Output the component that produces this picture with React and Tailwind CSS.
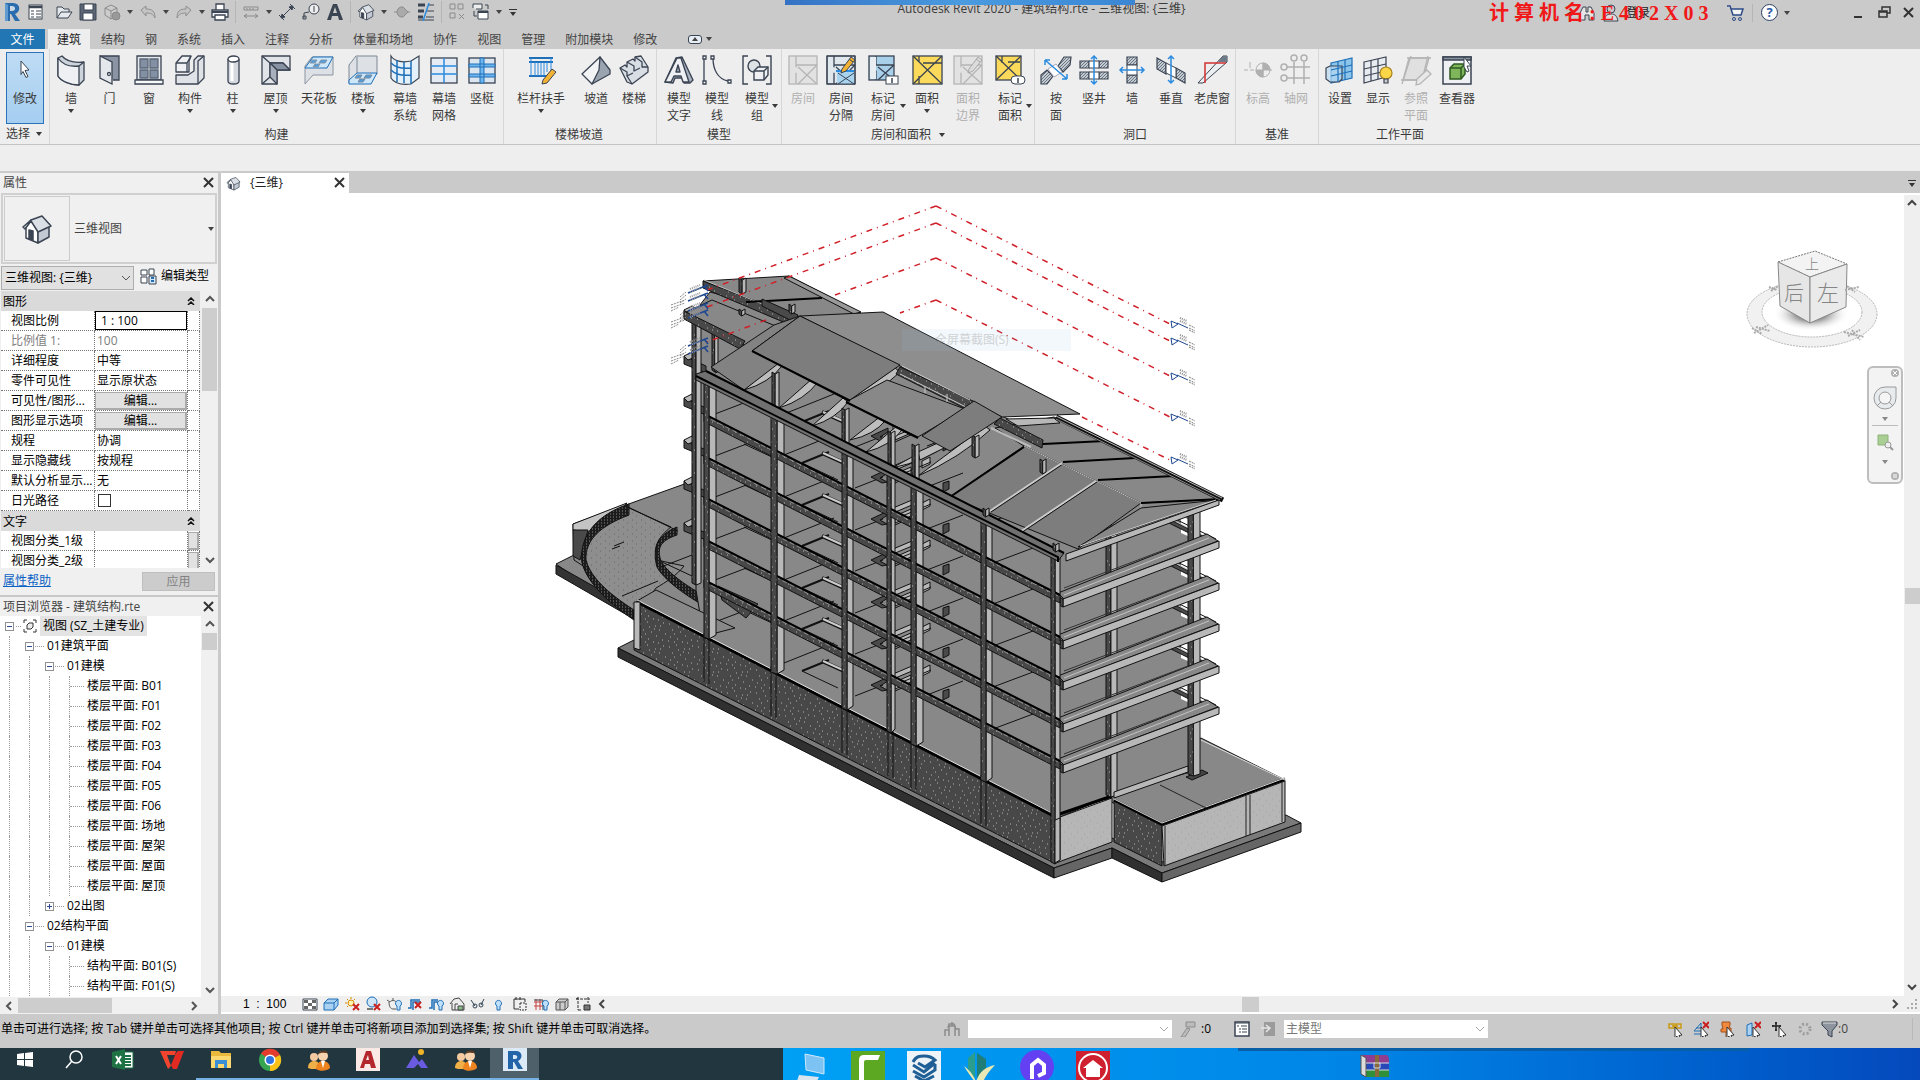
import React from "react";

const INK = "#3b4453";
const BLUE = "#1e6fb8";

// ---------- small helpers ----------
function Svg({ s = 16, children, className = "" }) {
  return (
    <svg width={s} height={s} viewBox={`0 0 ${s} ${s}`} fill="none" className={`shrink-0 ${className}`}>
      {children}
    </svg>
  );
}

const Down = ({ className = "" }) => (
  <svg width="6" height="4" viewBox="0 0 6 4" className={`shrink-0 ${className}`}>
    <path d="M0 0h6L3 4z" fill="currentColor" />
  </svg>
);

const chevrons = {
  up: "M2 7l4-4 4 4",
  down: "M2 4l4 4 4-4",
  left: "M8 2L4 6l4 4",
  right: "M4 2l4 4-4 4",
};
const Chevron = ({ dir, className = "" }) => (
  <svg width="12" height="12" viewBox="0 0 12 12" fill="none" className={`shrink-0 ${className}`}>
    <path d={chevrons[dir]} stroke="currentColor" strokeWidth="2" />
  </svg>
);

const Close = () => (
  <svg width="12" height="12" viewBox="0 0 12 12" fill="none">
    <path d="M1 1l9 9M10 1l-9 9" stroke="#333" strokeWidth="2" />
  </svg>
);

const House = ({ s = 16 }) => (
  <svg width={s} height={s} viewBox="0 0 32 32" fill="none" stroke={INK} strokeWidth="1.500" strokeLinejoin="round">
    <path d="M5 14l5-7 7 9v14L5 25z" fill="#fff" />
    <path d="M17 16l11-5v13l-11 6z" fill="#c3cad3" />
    <path d="M2 14l8-7 11-4 9 10-13 6-7-11-6 8z" fill="#dbe0e6" />
    <path d="M8 26v-9l4 1v9z" fill={INK} />
  </svg>
);

const Room = ({ fill, ink = INK, box = [4, 2, 25, 28] }) => {
  const [x, y, w, h] = box;
  return (
    <g stroke={ink} strokeWidth="1.3">
      <rect x={x} y={y} width={w} height={h} fill={fill} />
      <path d={`M${x + 7} ${y}v${h * 0.4}M${x + 7} ${y + h * 0.6}v${h * 0.4}M${x + 7} ${y + 9}h${w - 7}M${x + 9} ${y + 11}L${x + w} ${y + h}M${x + w} ${y + 9}L${x + 9} ${y + h}`} />
    </g>
  );
};

const Pencil = ({ color = "#f2b233", ink = INK }) => (
  <g stroke={ink}>
    <path d="M17 15l9-12 4 3-9 11-5 2z" fill={color} />
    <path d="M24 5l4 3" />
  </g>
);

const Hatch = ({ d }) => <path d={d} fill="url(#hatch)" stroke={INK} strokeWidth="1.2" />;
const ARROW = "#2a8be0";

const bigIcons = {
  cursor: <path d="M12 7l8 9-4 .5 3 6-2 1-3-6-2 3z" fill="#fff" stroke={INK} />,
  wall: (
    <g stroke={INK} strokeWidth="1.3" strokeLinejoin="round">
      <path d="M3 4l4-2c4 5 12 7 22 6v18l-5 5C15 31 6 27 3 22z" fill="#cdd3da" />
      <path d="M3 4c4 6 12 9 21 8v19C15 31 6 27 3 22z" fill="#eef0f3" />
      <path d="M24 12l5-4" />
    </g>
  ),
  door: (
    <g stroke={INK} strokeWidth="1.3">
      <path d="M6 2h19v24h-6" fill="#8a94a3" />
      <path d="M6 2l12 6v22L6 24z" fill="#e4e8ec" />
      <circle cx="15" cy="20" r="1.5" fill="#fff" />
    </g>
  ),
  window: (
    <g stroke={INK} strokeWidth="1.3">
      <path d="M4 2h24v24H4z" fill="#e4e8ec" />
      <path d="M7 5h8v9H7zM17 5h8v9h-8zM7 16h8v8H7zM17 16h8v8h-8z" fill="#8390a3" stroke="#5b6778" />
      <path d="M2 26h28v4H2z" fill="#f6f8fa" />
    </g>
  ),
  component: (
    <g stroke={INK} strokeWidth="1.3" strokeLinejoin="round">
      <path d="M2 9l6-7h9l-2 5v11H2z" fill="#eef0f3" />
      <path d="M20 6l4-4h6v22l-6 6H2v-9h12l6-4z" fill="#dfe3e8" />
      <path d="M2 9h11l4-7M13 9v9M24 30V7l6-5" />
    </g>
  ),
  column: (
    <g stroke={INK} strokeWidth="1.3">
      <path d="M11 5v22c0 4 11 4 11 0V5" fill="#d5dae0" />
      <ellipse cx="16.500" cy="5" rx="5.500" ry="3" fill="#fff" />
      <path d="M15 9v18" stroke="#fff" strokeWidth="3" />
    </g>
  ),
  roof: (
    <g stroke={INK} strokeWidth="1.3" strokeLinejoin="round">
      <path d="M2 2h28v14H17v14H2z" fill="#e0e4e9" />
      <path d="M2 2l8 7h13l7 7M10 9v14l-8 7" />
      <path d="M10 9h13l7 7H17z" fill="#8793a3" />
      <path d="M10 9v14l7 7V16z" fill="#a7b0bc" />
    </g>
  ),
  ceiling: (
    <g stroke="#8a94a0">
      <path d="M2 12l7-9h21v18H10l-8 9z" fill="#dde1e5" />
      <path d="M2 14l8-11h20l-6 11z" fill="#cfe7fb" stroke={BLUE} />
      <path d="M9 6h5l-2 3H7zM18 6h6l-2 3h-6zM12 10h5l-2 3h-5z" fill="#4c9fe3" />
    </g>
  ),
  floor: (
    <g stroke="#7c8794">
      <path d="M2 11l7-9h21v18H10L2 29z" fill="#dde1e5" />
      <path d="M10 3v17" />
      <path d="M2 26l8-7h20l-6 11H2z" fill="#cfe7fb" stroke={BLUE} />
      <path d="M10 21h5l-2 3H8zM19 21h6l-2 3h-6zM13 25h5l-2 3h-5z" fill="#4c9fe3" />
    </g>
  ),
  curtain: (
    <g stroke={INK} strokeWidth="1.2">
      <path d="M2 2c3 5 11 7 20 5l8-5v22l-8 6C13 31 5 29 2 24z" fill="#e4f0fa" />
      <path d="M2 9c5 5 12 6 20 5M2 16c5 5 12 6 20 5M8 6v22M15 8v21M22 7v23" stroke={BLUE} strokeWidth="1.5" />
    </g>
  ),
  curtainGrid: (
    <g>
      <rect x="3" y="4" width="26" height="25" fill="#e4ebf2" stroke={INK} strokeWidth="1.3" />
      <path d="M16 4v25M3 12h26M3 20h26" stroke={ARROW} strokeWidth="1.5" />
    </g>
  ),
  mullion: (
    <g>
      <rect x="3" y="4" width="26" height="25" fill="#dbe5ef" stroke={INK} strokeWidth="1.3" />
      <path d="M3 10h26v3H3zM3 20h26v3H3zM14 4h4v25h-4z" fill="#6fb6ee" stroke={BLUE} />
    </g>
  ),
  railing: (
    <g>
      <path d="M4 4h24M4 8h24M4 22h20" stroke={BLUE} strokeWidth="2" />
      <path d="M6 4v18M10 8v14M13 8v14M16 8v14M19 8v14M22 8v10M26 4v14" stroke={ARROW} />
      <path d="M18 26l9-11 4 3-9 11-5 1z" fill="#f2b233" stroke={INK} />
    </g>
  ),
  ramp: (
    <g stroke={INK} strokeWidth="1.3" strokeLinejoin="round">
      <path d="M20 3l10 13v4L12 30z" fill="#9aa4b1" />
      <path d="M2 20L20 3l-1 13-7 14z" fill="#f1f3f5" />
    </g>
  ),
  stair: (
    <g stroke={INK} strokeWidth="1.3" strokeLinejoin="round" fill="#d9dee4">
      <path d="M2 14l5-3 2 2v-5l6-3 2 2V3l6-1 7 11v5L14 30l-5-2z" />
      <path d="M2 14l7 4v4l6-3M9 8l7 4v5l6-3M17 3l7 5v5l6 0M9 22l5 8" fill="none" />
    </g>
  ),
  modelText: (
    <g stroke={INK} strokeWidth="1.4" strokeLinejoin="round">
      <path d="M2 28L13 4l6-1 11 23-3 3h-6l-2-5h-7l-2 5z" fill="#aab3bf" />
      <path d="M2 28L14 4h4l8 24h-6l-2-6h-7l-3 6zM13 18h4l-2-7z" fill="#eef0f3" />
    </g>
  ),
  modelLine: (
    <g stroke={INK} strokeWidth="1.3">
      <path d="M3 4v23M12 4c0 12 5 21 15 23" />
      <path d="M2 2h3v3H2zM2 27h3v3H2zM10 2h3v3h-3zM27 26h3v3h-3z" fill="#fff" />
    </g>
  ),
  modelGroup: (
    <g stroke={INK} strokeWidth="1.4">
      <path d="M7 2H2v28h5M25 2h5v28h-5" />
      <circle cx="13" cy="12" r="6" fill="#dde2e7" />
      <path d="M13 17l4-4h10v8l-4 5H13z" fill="#eef0f3" />
      <path d="M13 17h10v9M23 17l4-4" />
    </g>
  ),
  room: <Room fill="#e2e2e2" ink="#b5b5b5" box={[2, 2, 28, 28]} />,
  roomSep: (
    <g>
      <Room fill="#dfe6ec" box={[2, 2, 28, 28]} />
      <path d="M12 18h17v12H12z" fill="#a9d4f0" stroke="none" />
      <path d="M11 17h18" stroke={ARROW} strokeWidth="2" />
      <path d="M13 19l16 11M29 19L13 30M2 2h28v28H2z" stroke={INK} />
      <Pencil />
    </g>
  ),
  roomTag: (
    <g>
      <Room fill="#a9d0ea" box={[2, 2, 25, 24]} />
      <path d="M3 3h6v22H3z" fill="#e8edf1" />
      <rect x="19" y="22" width="12" height="8" fill="#fff" stroke={INK} />
      <path d="M25 24v5" stroke={INK} strokeWidth="1.5" />
    </g>
  ),
  area: (
    <g stroke={INK} strokeWidth="1.3">
      <rect x="2" y="2" width="29" height="28" fill="#fbd95b" />
      <path d="M2 2l29 28M31 2L2 30M8 2v6M8 22v8M12 9h19" />
    </g>
  ),
  areaBoundary: (
    <g>
      <Room fill="#e2e2e2" ink="#b5b5b5" box={[2, 2, 28, 28]} />
      <Pencil color="#dcdcdc" ink="#a8a8a8" />
    </g>
  ),
  areaTag: (
    <g>
      <g stroke={INK} strokeWidth="1.3">
        <rect x="2" y="2" width="25" height="24" fill="#fbd95b" />
        <path d="M2 2l25 24M27 2L2 26M8 2v7M14 8h12" />
      </g>
      <rect x="17" y="22" width="14" height="8" rx="4" fill="#fff" stroke={INK} />
      <path d="M24 24v5" stroke={INK} strokeWidth="1.500" />
    </g>
  ),
  byFace: (
    <g>
      <Hatch d="M18 12l6-9h7l-1 8-7 7z" />
      <Hatch d="M1 30v-9l6-5 6 6-6 8z" />
      <path d="M8 15l8-5 6 8-8 5z" fill="#fff" stroke="#aab" />
      <path d="M5 6l22 19M5 6h5M5 6v5M27 25h-5M27 25v-5" stroke={ARROW} strokeWidth="1.5" />
    </g>
  ),
  shaft: (
    <g>
      <Hatch d="M2 7h9v7H2z" />
      <Hatch d="M21 7h9v7h-9z" />
      <Hatch d="M2 18h9v7H2z" />
      <Hatch d="M21 18h9v7h-9z" />
      <path d="M11 7h10v7H11zM11 18h10v7H11z" fill="#fff" stroke={INK} />
      <path d="M16 2v28M13 5l3-3 3 3M13 27l3 3 3-3" stroke={ARROW} strokeWidth="1.5" />
    </g>
  ),
  openWall: (
    <g>
      <Hatch d="M11 3h10v8H11z" />
      <Hatch d="M11 21h10v8H11z" />
      <path d="M11 11h10v10H11z" fill="#fff" stroke={INK} />
      <path d="M4 16h24M7 13l-3 3 3 3M25 13l3 3-3 3" stroke={ARROW} strokeWidth="1.5" />
    </g>
  ),
  vertical: (
    <g>
      <Hatch d="M2 4l9 5v11l-9-5z" />
      <Hatch d="M21 14l9 5v10l-9-5z" />
      <path d="M11 9l10 5v10l-10-5z" fill="#fff" stroke={INK} />
      <path d="M16 2v27M13 5l3-3 3 3M13 26l3 3 3-3" stroke={ARROW} strokeWidth="1.5" />
    </g>
  ),
  dormer: (
    <g>
      <path d="M2 29L27 2h4v6L7 29z" fill="#eceff2" stroke={INK} />
      <path d="M22 8l5-6h4v6h-5z" fill="#6f7a88" />
      <path d="M9 29V9h21" stroke="#d22f2f" strokeWidth="1.5" />
    </g>
  ),
  level: (
    <g stroke="#b0b0b0">
      <path d="M2 16h28" strokeDasharray="4 2" />
      <circle cx="21" cy="16" r="7" fill="#eee" />
      <path d="M21 9v14M21 9a7 7 0 0 1 7 7h-7zM21 23a7 7 0 0 1-7-7h7z" fill="#b0b0b0" />
      <path d="M8 8v6" />
    </g>
  ),
  axis: (
    <g stroke="#b0b0b0" strokeWidth="1.5">
      <path d="M14 8v22M24 8v22M7 13h23M7 24h23" />
      <circle cx="14" cy="4" r="3" />
      <circle cx="24" cy="4" r="3" />
      <circle cx="4" cy="13" r="3" />
      <circle cx="4" cy="24" r="3" />
    </g>
  ),
  set: (
    <g stroke={BLUE} strokeWidth="1.2">
      <path d="M7 9l21-5v20L7 29z" fill="#8cc4ea" />
      <path d="M2 14l4-2h12v13l-3 3H6l-4-3z" fill="#b8daf2" fillOpacity="0.7" stroke={INK} />
      <path d="M14 7v21M21 6v20M7 16l21-5M7 22l21-5" />
    </g>
  ),
  show: (
    <g stroke={INK} strokeWidth="1.2">
      <path d="M2 8l22-5v20L2 29z" fill="#e8ebef" />
      <path d="M9 6v21M16 5v20M2 15l22-5M2 22l22-5" />
      <circle cx="24" cy="19" r="6" fill="#fbd648" stroke="#a9831c" />
      <path d="M22 25h4v4h-4z" fill="#ccc" />
    </g>
  ),
  refPlane: (
    <g stroke="#b5b5b5" strokeWidth="1.3">
      <path d="M9 4h20l-6 22H3z" fill="#e0e0e0" />
      <path d="M7 4h24M1 26h20M11 2L2 30M28 2l-4 16" />
      <path d="M17 25l10-9 4 4-11 10-4 1z" fill="#e8e8e8" />
    </g>
  ),
  viewer: (
    <g stroke={INK} strokeWidth="1.5">
      <rect x="2" y="3" width="28" height="27" fill="#eef0f3" />
      <path d="M2 3h28v3H2z" fill="#8a93a0" />
      <path d="M9 14l4-4h11v10l-4 5H9z" fill="#7fb55b" stroke="#2f5a21" />
      <path d="M9 14h11v11M20 14l4-4" stroke="#2f5a21" />
      <path d="M23 3l7 9h-4l2 5-2 1-3-5z" fill="#fff" strokeWidth="1" />
    </g>
  ),
};

// ---------- quick access bar ----------
const RLogo = ({ s = 20 }) => (
  <svg width={s} height={s} viewBox="0 0 20 20">
    <path d="M3 1h8c8 0 8 9 2 11l5 7h-5L9 12H8v7H3z" fill="#2a6cae" />
    <path d="M8 4h2c4 0 4 5 0 5H8z" fill="#cbd9e6" />
    <path d="M3 1l3 2v16H3z" fill="#5f9bd0" />
  </svg>
);

const quick = {
  menu: (
    <g stroke={INK}>
      <rect x="2" y="2" width="13" height="14" fill="#fff" />
      <path d="M2 4h13" strokeWidth="2.5" />
      <path d="M4 8h3M4 11h3M4 14h3M9 8h5M9 11h5M9 14h5" />
    </g>
  ),
  open: <path d="M2 15V4h5l2 2h5v3M2 15l4-6h11l-4 6z" fill="#e5e8ec" stroke={INK} />,
  save: (
    <g stroke={INK}>
      <path d="M1 1h16v16H1z" fill="#5c6676" />
      <path d="M5 1h9v6H5zM4 10h10v7H4z" fill="#fff" />
    </g>
  ),
  sync: (
    <g stroke="#8b8b8b">
      <path d="M2 5l6-3 6 3v7l-6 4-6-4zM2 5l6 3 6-3M8 8v8" fill="#ccc" />
      <circle cx="13" cy="13" r="4" fill="#999" />
    </g>
  ),
  undo: <path d="M2 7l5-4v3c6 0 9 2 9 9-2-4-4-5-9-5v3z" stroke="#8f8f8f" fill="#c4c4c4" />,
  redo: <path d="M16 7l-5-4v3c-6 0-9 2-9 9 2-4 4-5 9-5v3z" stroke="#8f8f8f" fill="#c4c4c4" />,
  print: (
    <g stroke={INK} strokeWidth="1.3">
      <path d="M5 7V1h8v6" fill="#fff" />
      <path d="M1 7h16v7H1z" fill="#f4f5f7" />
      <path d="M4 12h10v5H4z" fill="#fff" />
      <path d="M1 9h16" strokeWidth="2" />
    </g>
  ),
  measure: <path d="M2 4h14v3H2zM2 13h14M2 13l3-2M2 13l3 2M16 13l-3-2M16 13l-3 2M5 5v2M8 5v2M11 5v2" stroke="#8b8b8b" />,
  dim: <path d="M3 15L15 3M1 12l5 5M12 1l5 5M3 15l1-4 3 3zM15 3l-1 4-3-3z" stroke={INK} fill={INK} />,
  tag: (
    <g stroke={INK}>
      <circle cx="12" cy="6" r="5" fill="#eee" />
      <path d="M12 3v6M7 9l-5 1v5M1 13h3v3H1z" />
    </g>
  ),
  text: <path d="M1 17L7 1h4l6 16h-4l-1-4H6l-1 4zM7 10h4L9 4z" fill={INK} />,
  section: <path d="M1 9h3M15 9h2M4 9a5 5 0 0 0 6 5l5-5-5-5a5 5 0 0 0-6 5" stroke="#8b8b8b" fill="#aaa" />,
  thin: (
    <g>
      <path d="M1 2h7M1 8h6M1 14h5" stroke={INK} strokeWidth="3" />
      <path d="M11 2h6M10 8h7M9 14h8M1 17h16" stroke={INK} />
      <path d="M12 0L6 18" stroke={ARROW} strokeWidth="1.500" />
    </g>
  ),
  closeHidden: <path d="M2 1h5v5H2zM10 1h5v5h-5zM2 10h5v5H2zM11 11l5 5M16 11l-5 5" stroke="#8b8b8b" />,
  switchWin: (
    <g stroke={INK}>
      <path d="M1 5V1h9v5H4" fill="#eee" />
      <path d="M6 8h10v8H6z" fill="#fff" />
      <path d="M6 9h10" strokeWidth="2" />
      <path d="M2 8v5h3M13 2h3v4" />
    </g>
  ),
};

const quickBar = [
  "menu", "gap", "open", "save", "sync", "v", "undo", "v", "redo", "v", "print", "|",
  "measure", "v", "dim", "tag", "text", "|", "house", "v", "section", "thin", "|", "closeHidden", "switchWin", "v",
];

function TitleBar() {
  return (
    <header className="relative flex h-[29px] items-start bg-[#cacaca] pt-px">
      <div className="flex items-center">
        <button aria-label="Revit" className="flex h-[22px] w-6 items-center justify-center"><RLogo /></button>
        {quickBar.map((k, i) => {
          if (k === "gap") return <span key={i} className="w-1" />;
          if (k === "|") return <span key={i} className="mx-[3px] h-[22px] w-px bg-[#b5b5b5]" />;
          if (k === "v")
            return (
              <button key={i} aria-label="更多" className="flex w-3 justify-center text-[#444]">
                <Down />
              </button>
            );
          return (
            <button key={i} aria-label={k} className="flex h-[22px] w-6 items-center justify-center">
              {k === "house" ? <House s={18} /> : <Svg s={18}>{quick[k]}</Svg>}
            </button>
          );
        })}
        <button aria-label="自定义" className="ml-1 flex flex-col items-center gap-[2px] text-[#333]">
          <span className="h-px w-2 bg-[#333]" />
          <Down />
        </button>
      </div>
      <div className="absolute inset-x-0 top-0 flex justify-center pl-[163px] text-[12px] leading-[17px] text-[#3c3c3c]">
        <span>Autodesk Revit 2020 - 建筑结构.rte - 三维视图: {"{三维}"}</span>
      </div>
      <div className="absolute left-[785px] top-0 h-[5px] w-[350px] bg-gradient-to-r from-[#3572c4] via-[#4a9be0] to-[#3a86d4]" />
      <div className="ml-auto flex h-[23px] items-center">
        <div className="relative mr-1 flex h-[23px] items-center gap-[6px] pl-[78px] pr-[72px] text-[12px] text-[#222]">
          <span className="text-[10px]">◂</span>
          <Svg s={18}>
            <path d="M2 16V9l3-6h3v5h2V3h3l3 6v7h-5v-5H7v5z" fill="#e5e5e5" stroke={INK} />
          </Svg>
          <Svg s={18}>
            <circle cx="9" cy="5" r="4" stroke={INK} />
            <path d="M2 17c1-5 3-7 7-7s6 2 7 7z" stroke={INK} fill="#ddd" />
          </Svg>
          <button>登录</button>
          <span className="absolute left-0 top-0 whitespace-nowrap font-['Liberation_Serif','Noto_Sans_CJK_SC',serif] text-[20px] leading-[25px] font-bold text-[#f01818]">
            计 算 机 名 : E 4 0 2 X 0 3
          </span>
        </div>
        <button aria-label="购物车">
          <Svg s={18}>
            <path d="M1 2h3l3 9h8l2-6H5" fill="#f3f3f3" stroke="#2c4a86" strokeWidth="1.500" />
            <circle cx="8" cy="15" r="1.500" stroke="#2c4a86" />
            <circle cx="14" cy="15" r="1.500" stroke="#2c4a86" />
          </Svg>
        </button>
        <span className="mx-2 h-[18px] w-px bg-[#b5b5b5]" />
        <button aria-label="帮助" className="flex h-[17px] w-[17px] items-center justify-center rounded-full border border-[#2b3f63] bg-white text-[13px] leading-none font-bold text-[#2b5ba8]">?</button>
        <Down className="mr-16 ml-[6px] text-[#444]" />
        <button aria-label="最小化" className="mt-2 h-[2px] w-2 bg-[#333]" />
        <button aria-label="还原" className="ml-4">
          <Svg s={13}>
            <path d="M4 4V1h8v6H9M1 5h8v6H1zM1 6h8" stroke="#333" strokeWidth="1.500" />
          </Svg>
        </button>
        <button aria-label="关闭" className="mr-[5px] ml-[12px]"><Close /></button>
      </div>
    </header>
  );
}

const tabs = ["结构", "钢", "系统", "插入", "注释", "分析", "体量和场地", "协作", "视图", "管理", "附加模块", "修改"];

function Tabs() {
  return (
    <nav className="flex h-5 bg-[#cacaca] text-[12px] leading-[22px] text-[#444]">
      <button className="w-[45px] bg-[#2276b3] text-white">文件</button>
      <button className="ml-[3px] w-[42px] bg-[#eee] text-[#222]">建筑</button>
      {tabs.map((t, i) => (
        <button key={t} className={i === 0 ? "pr-[10px] pl-[11px]" : "px-[10px]"}>{t}</button>
      ))}
      <button aria-label="显示选项" className="ml-[21px] flex items-center gap-1">
        <span className="flex h-[9px] w-[14px] items-center justify-center rounded-[3px] border border-[#3b4453] bg-[#e8eef5]">
          <Down className="rotate-180" />
        </span>
        <Down />
      </button>
    </nav>
  );
}

// ---------- ribbon ----------
// [icon, label lines, width class, arrow: "below" | "side", disabled]
const panels = [
  {
    title: "构建",
    pad: "px-[2px]",
    items: [
      ["wall", ["墙"], "w-[38px]", "below"],
      ["door", ["门"], "w-[39px]"],
      ["window", ["窗"], "w-[40px]"],
      ["component", ["构件"], "w-[42px]", "below"],
      ["column", ["柱"], "w-[43px]", "below"],
      ["roof", ["屋顶"], "w-[43px]", "below"],
      ["ceiling", ["天花板"], "w-[44px]"],
      ["floor", ["楼板"], "w-[44px]", "below"],
      ["curtain", ["幕墙", "系统"], "w-[40px]"],
      ["curtainGrid", ["幕墙", "网格"], "w-[38px]"],
      ["mullion", ["竖梃"], "w-[38px]"],
    ],
  },
  {
    title: "楼梯坡道",
    pad: "pl-[2px] pr-1",
    items: [
      ["railing", ["栏杆扶手"], "w-[70px]", "below"],
      ["ramp", ["坡道"], "w-[40px]"],
      ["stair", ["楼梯"], "w-[36px]"],
    ],
  },
  {
    title: "模型",
    pad: "px-[3px]",
    items: [
      ["modelText", ["模型", "文字"], "w-[38px]"],
      ["modelLine", ["模型", "线"], "w-[38px]"],
      ["modelGroup", ["模型", "组"], "w-[42px]", "side"],
    ],
  },
  {
    title: "房间和面积",
    pad: "px-[2px]",
    more: true,
    items: [
      ["room", ["房间"], "w-[38px]", null, true],
      ["roomSep", ["房间", "分隔"], "w-[38px]"],
      ["roomTag", ["标记", "房间"], "w-[46px]", "side"],
      ["area", ["面积"], "w-[42px]", "below"],
      ["areaBoundary", ["面积", "边界"], "w-[40px]", null, true],
      ["areaTag", ["标记", "面积"], "w-[44px]", "side"],
    ],
  },
  {
    title: "洞口",
    pad: "px-[2px]",
    items: [
      ["byFace", ["按", "面"], "w-[38px]"],
      ["shaft", ["竖井"], "w-[38px]"],
      ["openWall", ["墙"], "w-[38px]"],
      ["vertical", ["垂直"], "w-[40px]"],
      ["dormer", ["老虎窗"], "w-[42px]"],
    ],
  },
  {
    title: "基准",
    pad: "px-[3px]",
    items: [
      ["level", ["标高"], "w-[38px]", null, true],
      ["axis", ["轴网"], "w-[38px]", null, true],
    ],
  },
  {
    title: "工作平面",
    pad: "px-[2px]",
    items: [
      ["set", ["设置"], "w-[38px]"],
      ["show", ["显示"], "w-[38px]"],
      ["refPlane", ["参照", "平面"], "w-[38px]", null, true],
      ["viewer", ["查看器"], "w-[44px]"],
    ],
  },
];

function RibbonItem({ item }) {
  const [icon, lines, width, arrow, disabled] = item;
  return (
    <button disabled={disabled} className={`relative flex h-[76px] shrink-0 flex-col items-center pt-1 ${width} ${disabled ? "text-[#b0b0b0]" : "text-[#3a3a3a]"}`}>
      <Svg s={32}>{bigIcons[icon]}</Svg>
      <span className="mt-1 flex flex-col whitespace-nowrap text-[12px] leading-[17px]">
        {lines.map(l => <span key={l}>{l}</span>)}
      </span>
      {arrow === "below" && <Down className="mt-[2px]" />}
      {arrow === "side" && <Down className="absolute right-0 bottom-[18px]" />}
    </button>
  );
}

function Ribbon() {
  return (
    <div className="flex h-24 border-b border-[#c4c4c4] bg-[#eee] text-[12px] text-[#3a3a3a]">
      <svg width="0" height="0" className="absolute">
        <defs>
          <pattern id="hatch" width="3" height="3" patternUnits="userSpaceOnUse">
            <rect width="3" height="3" fill="#c3cad2" />
            <path d="M0 3L3 0" stroke="#6b7683" />
          </pattern>
        </defs>
      </svg>
      <div className="flex w-[50px] flex-col border-r border-[#d6d6d6] pt-[3px] pl-[6px]">
        <button className="flex h-[72px] w-[38px] flex-col items-center border border-[#2b73b8] bg-gradient-to-b from-[#bfdcf4] to-[#a5cef1]">
          <Svg s={32} className="mt-px">{bigIcons.cursor}</Svg>
          <span className="mt-1 leading-[17px]">修改</span>
        </button>
        <button className="flex items-center gap-[6px] leading-5">选择 <Down /></button>
      </div>
      {panels.map((p, i) => (
        <section key={p.title} className={`flex flex-col ${i < panels.length - 1 ? "border-r border-[#d6d6d6]" : ""} ${p.pad}`}>
          <div className="flex pt-px">
            {p.items.map((it, n) => <RibbonItem key={n} item={it} />)}
          </div>
          <div className="flex items-center justify-center gap-2 leading-[17px]">
            {p.title}
            {p.more && <Down />}
          </div>
        </section>
      ))}
    </div>
  );
}

// ---------- properties ----------
const props = [
  ["比例值 1:", "100", "dim"],
  ["详细程度", "中等"],
  ["零件可见性", "显示原状态"],
  ["可见性/图形...", "编辑...", "button"],
  ["图形显示选项", "编辑...", "button"],
  ["规程", "协调"],
  ["显示隐藏线", "按规程"],
  ["默认分析显示...", "无"],
  ["日光路径", "", "check"],
];

const cell = "border-r border-b border-dotted border-[#777] p-0";

function GroupRow({ title }) {
  return (
    <tr className="h-5 bg-[#dadada]">
      <th colSpan="3" className="p-0 text-left font-normal text-black">
        <span className="flex items-center justify-between pr-[5px] pl-[2px]">
          {title}
          <Svg s={8}><path d="M1 4l3-3 3 3M1 8l3-3 3 3" stroke="#111" strokeWidth="1.500" /></Svg>
        </span>
      </th>
    </tr>
  );
}

function Properties() {
  return (
    <section className="flex h-[422px] shrink-0 flex-col bg-[#f0f0f0] pl-px text-[12px]">
      <div className="flex h-5 items-center justify-between pr-[3px] pl-[2px] text-[#444]">
        属性
        <button aria-label="关闭属性"><Close /></button>
      </div>
      <button className="mr-px flex h-[71px] items-center border-2 border-[#d0d0d0] pr-px pl-px text-[#444]">
        <span className="mr-1 flex h-[65px] w-[66px] items-center justify-center border border-[#ccc]"><House s={32} /></span>
        三维视图
        <Down className="ml-auto" />
      </button>
      <div className="flex h-[27px] items-center pt-px">
        <div className="relative flex h-6 w-[133px] items-center">
          <select aria-label="类型" className="h-full w-full appearance-none border border-[#adadad] bg-[#e1e1e1] pl-[3px] text-black">
            <option>三维视图: {"{三维}"}</option>
          </select>
          <Svg s={10} className="pointer-events-none absolute right-[3px]"><path d="M1 3l4 4 4-4" stroke="#555" /></Svg>
        </div>
        <button className="ml-[6px] flex items-center gap-1 pb-1 text-black">
          <Svg s={17}>
            <path d="M1 2h6v5H1zM9 1h5v6H9zM1 9h6v6H1z" stroke={INK} fill="#fff" />
            <path d="M9 8h7v8H9z" fill="#dbe9f6" stroke={INK} />
            <path d="M11 10h3M11 13h3" stroke={BLUE} strokeWidth="2" />
          </Svg>
          编辑类型
        </button>
      </div>
      <div className="flex h-[277px] gap-[2px] overflow-hidden">
        <div className="h-full w-[199px] overflow-hidden bg-white">
          <table className="w-full table-fixed border-separate border-spacing-0 leading-[19px] text-black">
            <colgroup>
              <col className="w-[94px]" />
              <col />
              <col className="w-[12px]" />
            </colgroup>
            <tbody>
              <GroupRow title="图形" />
              <tr className="h-5">
                <td className={`${cell} pl-[10px]`}>视图比例</td>
                <td className={cell}><input aria-label="视图比例" defaultValue="1 : 100" className="block h-[19px] w-full border border-black bg-white pl-[5px] outline-none" /></td>
                <td className={cell} />
              </tr>
              {props.map(([name, value, kind]) => (
                <tr key={name} className={`h-5 ${kind === "dim" ? "text-[#808080]" : ""}`}>
                  <td className={`${cell} overflow-hidden pl-[10px] whitespace-nowrap`}>{name}</td>
                  <td className={cell}>
                    {kind === "button" && <button className="block h-[18px] w-full border border-r-2 border-b-2 border-[#aaa] bg-[#e1e1e1] leading-[15px]">{value}</button>}
                    {kind === "check" && <input aria-label={name} type="checkbox" className="ml-[3px] block h-[13px] w-[13px] appearance-none border border-[#333] bg-white" />}
                    {kind !== "button" && kind !== "check" && <span className="pl-[2px]">{value}</span>}
                  </td>
                  <td className={cell} />
                </tr>
              ))}
              <GroupRow title="文字" />
              {["视图分类_1级", "视图分类_2级"].map(n => (
                <tr key={n} className="h-5">
                  <td className={`${cell} pl-[10px]`}>{n}</td>
                  <td className={cell} />
                  <td className={cell}><button aria-label={n} className="block h-[18px] w-full border border-r-2 border-b-2 border-[#aaa] bg-[#e1e1e1]" /></td>
                </tr>
              ))}
            </tbody>
          </table>
        </div>
        <div className="flex w-[15px] flex-col items-center text-[#555]">
          <Chevron dir="up" className="mt-[3px]" />
          <span className="mt-[2px] h-[83px] w-full bg-[#cdcdcd]" />
          <Chevron dir="down" className="mt-auto mb-[2px]" />
        </div>
      </div>
      <div className="flex h-[26px] items-center justify-between pr-[3px] pl-[2px]">
        <a href="#help" className="text-[#0a62c4] underline">属性帮助</a>
        <button disabled className="h-[19px] w-[73px] border border-[#bfbfbf] bg-[#ccc] leading-[17px] text-[#838383]">应用</button>
      </div>
    </section>
  );
}

// ---------- project browser ----------
const floors = ["B01", "F01", "F02", "F03", "F04", "F05", "F06", "场地", "屋架", "屋面", "屋顶"];
const tree = [
  [1, "01建筑平面", "-"],
  [2, "01建模", "-"],
  ...floors.map(f => [3, `楼层平面: ${f}`]),
  [2, "02出图", "+"],
  [1, "02结构平面", "-"],
  [2, "01建模", "-"],
  [3, "结构平面: B01(S)"],
  [3, "结构平面: F01(S)"],
];

const Toggle = ({ sign }) => (
  <Svg s={9}>
    <rect x="0.5" y="0.5" width="8" height="8" fill="#fff" stroke="#919191" />
    <path d={sign === "+" ? "M2 4.500h5M4.500 2v5" : "M2 4.500h5"} stroke="#2b4a8f" />
  </Svg>
);

const Guide = () => <span className="ml-[9px] w-[11px] shrink-0 self-stretch border-l border-dotted border-[#999]" />;

function TreeRow({ level, label, sign }) {
  return (
    <li className="flex h-5 items-center whitespace-nowrap">
      {Array.from({ length: level }, (_, i) => <Guide key={i} />)}
      {sign ? (
        <>
          <button aria-label={label} className="ml-[5px]"><Toggle sign={sign} /></button>
          <span className="mr-[3px] ml-px w-[9px] border-t border-dotted border-[#999]" />
        </>
      ) : (
        <>
          <span className="ml-[9px] self-stretch border-l border-dotted border-[#999]" />
          <span className="mr-[3px] w-[14px] border-t border-dotted border-[#999]" />
        </>
      )}
      {label}
    </li>
  );
}

function Browser() {
  return (
    <section className="flex min-h-0 flex-1 flex-col border-t-2 border-[#c8c8c8] bg-[#f0f0f0] text-[12px]">
      <div className="flex h-[19px] shrink-0 items-center justify-between pr-[3px] pl-[3px] text-[#444]">
        项目浏览器 - 建筑结构.rte
        <button aria-label="关闭浏览器"><Close /></button>
      </div>
      <div className="flex min-h-0 flex-1">
        <ul className="min-w-0 flex-1 overflow-hidden bg-white text-black">
          <li className="flex h-5 items-center whitespace-nowrap">
            <button aria-label="视图" className="ml-[5px]"><Toggle sign="-" /></button>
            <span className="mx-[2px] w-[5px] border-t border-dotted border-[#999]" />
            <Svg s={14}>
              <path d="M4 1H1v3M10 1h3v3M4 13H1v-3M10 13h3v-3" stroke="#333" />
              <path d="M4 6l2-2h4v4L8 10H4z" stroke="#333" fill="#eee" />
            </Svg>
            <span className="ml-[3px] bg-[#e3e3e3] px-[3px] leading-5">视图 (SZ_土建专业)</span>
          </li>
          {tree.map(([level, label, sign], i) => <TreeRow key={i} level={level} label={label} sign={sign} />)}
        </ul>
        <div className="flex w-[17px] flex-col items-center text-[#555]">
          <Chevron dir="up" className="mt-[3px]" />
          <span className="mt-[2px] h-[17px] w-[15px] bg-[#cdcdcd]" />
          <Chevron dir="down" className="mt-auto mb-[1px]" />
        </div>
      </div>
      <div className="flex h-[17px] shrink-0 items-center pr-[18px] pl-[3px] text-[#555]">
        <Chevron dir="left" />
        <span className="ml-[3px] h-[15px] w-[94px] bg-[#cdcdcd]" />
        <Chevron dir="right" className="ml-auto" />
      </div>
    </section>
  );
}

// ---------- 3D model ----------
const poly = pts => pts.map(p => p.join(",")).join(" ");
const P = ({ pts, fill, stroke = "#111" }) => <polygon points={poly(pts)} fill={fill} stroke={stroke} strokeWidth="1" strokeLinejoin="round" />;

const TOP = "#888";
const DARK = "#4a4a4a";
const LIGHT = "#b8b8b8";
const GRIT = "url(#grit)";
const LONG = 0.509; // slope of the long facade
const SHORT = -0.342; // slope of the gable side

// x, dark face width, full width, top y, bottom y of the columns on the long facade
const frontCols = [
  [704, 5, 12, 372, 637],
  [771, 6, 13, 408, 672],
  [842, 5, 11, 440, 708],
  [887, 4, 8, 466, 731],
  [911, 5, 12, 478, 744],
  [981, 5, 11, 512, 780],
  [1051, 4, 9, 550, 862],
];
const floorsY = [595, 637, 678, 720, 761];

function FrontBeam({ y, from = 704 }) {
  const y0 = y - (1060 - from) * LONG;
  return (
    <>
      <P fill={GRIT} pts={[[from, y0], [1060, y], [1060, y + 8], [from, y0 + 8]]} />
      <path d={`M${from} ${y0}L1060 ${y}`} stroke="#000" strokeWidth="2" />
      <path d={`M${from} ${y0 + 2}L1060 ${y + 2}`} stroke="#8f8f8f" strokeDasharray="5 3" />
    </>
  );
}

function SideBeam({ y }) {
  const r = y + 158 * SHORT;
  return (
    <>
      <P fill={TOP} pts={[[1058, y - 2], [1207, r - 7], [1218, r], [1064, y + 4]]} />
      <path d={`M1064 ${y}L1209 ${r - 3}`} stroke="#c4c4c4" />
      <path d={`M1064 ${y - 7}L1188 ${r}`} stroke="#333" />
      <P fill={LIGHT} pts={[[1063, y + 4], [1219, r], [1219, r + 7], [1063, y + 12]]} />
      <P fill={DARK} pts={[[1055, y], [1063, y + 4], [1063, y + 12], [1055, y + 8]]} />
    </>
  );
}

// far edge of each slab, with the bit of sky that shows through
function BackEdge({ y }) {
  return (
    <>
      <P fill="#fff" stroke="none" pts={[[1181, y - 79], [1190, y - 75], [1190, y - 58], [1181, y - 62]]} />
      <P fill={DARK} pts={[[1169, y - 72], [1207, y - 53], [1207, y - 57], [1169, y - 76]]} />
      <path d={`M1169 ${y - 77}L1214 ${y - 54}`} stroke="#c4c4c4" />
      <path d={`M1169 ${y - 79}L1216 ${y - 56}`} stroke="#111" />
    </>
  );
}

const Column = ({ x, top, bottom, w = 11 }) => (
  <>
    <P fill={GRIT} pts={[[x, top], [x + w * 0.45, top + 2], [x + w * 0.45, bottom], [x, bottom - 2]]} />
    <P fill={LIGHT} pts={[[x + w * 0.45, top + 2], [x + w, top], [x + w, bottom - 2], [x + w * 0.45, bottom]]} />
  </>
);

function Interior() {
  // secondary beams and stair openings seen behind the facade
  return [554, ...floorsY, 803].map(y => (
    <g key={y} stroke="#111">
      <path d={`M802 ${y - 132}l27 -11`} strokeWidth="2" />
      <path d={`M822 ${y - 142}l22 10`} strokeWidth="4" />
      <path d={`M823 ${y - 142}l20 9`} stroke="#ccc" strokeWidth="2" />
      <path d={`M802 ${y - 132}l36 17`} />
      <path d={`M715 ${y - 181}l34 -13M784 ${y - 140}l50 -20M855 ${y - 107}l28 -11M744 ${y - 193}l30 14`} />
      <P fill={DARK} pts={[[871, y - 118], [888, y - 126], [888, y - 122], [880, y - 117], [887, y - 113], [882, y - 112]]} />
      <P fill={LIGHT} pts={[[893, y - 129], [912, y - 137], [912, y - 132], [893, y - 124]]} />
      <P fill={LIGHT} pts={[[895, y - 121], [911, y - 128], [911, y - 121], [895, y - 114]]} />
      <P fill={LIGHT} pts={[[922, y - 134], [930, y - 138], [930, y - 131], [922, y - 127]]} />
      <path d={`M895 ${y - 118}l36 -15M895 ${y - 112}l18 -8`} />
      <P fill={DARK} pts={[[943, y - 112], [949, y - 114], [949, y - 106], [943, y - 103]]} />
      <path d={`M927 ${y - 108}l36 -14M993 ${y - 74}l40 -15`} />
    </g>
  ));
}

function LevelMark({ x, y }) {
  return (
    <g>
      <path d={`M${x - 1} ${y - 4}l7 3-6 4zM${x + 5} ${y - 2}l11 5`} stroke="#1d4690" />
      <path d={`M${x + 8} ${y - 7}l7 3M${x + 8} ${y - 4}l7 3`} stroke="#8d8d8d" strokeWidth="2" strokeDasharray="1 1" />
      <path d={`M${x + 17} ${y}l6 3M${x + 17} ${y + 3}l6 3M${x + 17} ${y + 5}l6 3`} stroke="#777" strokeDasharray="2 1" />
    </g>
  );
}

function LevelMarkLeft({ x, y, wide }) {
  return (
    <g>
      <path d={`M${x - 20} ${y + 4}l20-8M${x - 4} ${y - 3}l4 5`} stroke="#1d4690" strokeWidth="1.500" />
      <path d={`M${x - 18} ${y}l10-4M${x - 18} ${y + 3}l10-4`} stroke="#999" strokeWidth="2" strokeDasharray="1 1" />
      <path d={`M${x - (wide ? 37 : 28)} ${y + 8}l${wide ? 14 : 6} -5m${wide ? -14 : -6} 8l${wide ? 14 : 6} -5m${wide ? -14 : -6} 8l${wide ? 8 : 6} -4`} stroke="#888" strokeDasharray="2 1" />
    </g>
  );
}

function Model() {
  return (
    <svg width="780" height="710" viewBox="540 190 780 710" fill="none" className="absolute top-0 left-[319px]">
      <defs>
        <pattern id="grit" width="29" height="23" patternUnits="userSpaceOnUse">
          <rect width="29" height="23" fill="#484848" />
          <path d="M2 3h1M9 1h1M17 5h1M25 2h1M5 9h1M13 11h1M21 9h1M27 13h1M3 16h1M10 18h1M18 15h1M24 19h1M7 21h1M15 21h1M20 22h1M11 6h1M7 13h1M22 5h1M16 8h1M1 20h1" stroke="#b5b5b5" />
        </pattern>
        <pattern id="gritLight" width="13" height="11" patternUnits="userSpaceOnUse">
          <rect width="13" height="11" fill="#b6b6b6" />
          <path d="M2 3h1M8 1h1M11 7h1M5 9h1" stroke="#a2a2a2" />
        </pattern>
        <pattern id="ramp" width="9" height="7" patternUnits="userSpaceOnUse">
          <rect width="9" height="7" fill="#8e8e8e" />
          <path d="M2 2h1M6 5h1" stroke="#666" />
        </pattern>
        <pattern id="mesh" width="3" height="3" patternUnits="userSpaceOnUse">
          <rect width="3" height="3" fill="#1c1c1c" />
          <path d="M1 1h1" stroke="#888" />
        </pattern>
      </defs>

      {/* ramp at the back left */}
      <P fill={TOP} pts={[[556, 564], [574, 555], [640, 590], [640, 612], [634, 618]]} />
      <P fill="#333" pts={[[556, 565], [634, 609], [634, 619], [556, 574]]} />
      <P fill={TOP} pts={[[573, 524], [690, 482], [760, 560], [760, 640], [637, 601], [574, 560]]} />
      <P fill="#c4c4c4" pts={[[573, 524], [627, 503], [615, 516], [590, 532], [573, 530]]} />
      <P fill={DARK} pts={[[573, 530], [588, 530], [580, 560], [573, 556]]} />
      <path d="M627 507c-30 10-46 28-45 55 4 18 24 38 52 56l22-30c10-6 20-12 28-22l-27-6c-4-12 0-22 14-33z" fill="url(#ramp)" stroke="#111" />
      <path d="M629 504c-30 10-50 30-47 58 4 18 22 38 52 58v-10c-28-18-44-34-48-50-1-20 14-34 43-45z" fill="url(#mesh)" stroke="#111" />
      <path d="M677 527c-20 8-25 22-20 40 8 16 44 40 82 56l8-6c-40-18-76-38-86-56-4-12-2-20 16-26z" fill="url(#mesh)" stroke="#111" />
      <path d="M628 507l50 24M622 596l36-15M614 546l10-4M612 549l8-3" stroke="#111" />
      <path d="M661 567l44-17M662 562l30 14" stroke="#111" />

      {/* base slab */}
      <P fill="#7a7a7a" pts={[[618, 648], [634, 640], [1054, 855], [1112, 838], [1162, 862], [1286, 815], [1301, 823], [1162, 873], [1112, 848], [1054, 868]]} />
      <P fill="#303030" pts={[[618, 648], [1054, 868], [1054, 878], [618, 657]]} />
      <P fill="#666" pts={[[1054, 868], [1112, 848], [1112, 858], [1054, 878]]} />
      <P fill="#303030" pts={[[1112, 848], [1162, 873], [1162, 882], [1112, 858]]} />
      <P fill="#666" pts={[[1162, 873], [1301, 823], [1301, 832], [1162, 882]]} />

      {/* low annex on the right */}
      <P fill={TOP} pts={[[1100, 797], [1201, 738], [1285, 780], [1162, 825]]} />
      <P fill={GRIT} pts={[[1114, 801], [1162, 826], [1162, 866], [1114, 842]]} />
      <P fill="url(#gritLight)" pts={[[1162, 826], [1285, 781], [1285, 822], [1164, 866]]} />
      <path d="M1114 800l48 24 123-45" stroke="#000" strokeWidth="3" />
      <path d="M1114 799l48 24 123-45M1201 740l84 40" stroke="#ddd" />
      <path d="M1165 826v40M1246 796v40M1250 795v40M1282 782v40" stroke="#222" />
      <path d="M1160 785l46 23" stroke="#222" />
      <P fill="#444" pts={[[1186, 777], [1202, 770], [1208, 773], [1192, 780]]} />

      {/* building body */}
      <P fill={TOP} pts={[[696, 310], [710, 292], [800, 316], [1010, 420], [1218, 500], [1190, 515], [1190, 772], [1110, 796], [1060, 817], [704, 638], [696, 590]]} />
      <Interior />
      <P fill={TOP} pts={[[637, 601], [656, 590], [735, 628], [704, 636]]} />
      <P fill={GRIT} pts={[[718, 586], [758, 604], [746, 618], [722, 600]]} />

      {/* basement */}
      <P fill={GRIT} pts={[[637, 601], [1054, 816], [1054, 863], [634, 650]]} />
      <P fill="url(#gritLight)" pts={[[1060, 817], [1112, 798], [1112, 842], [1056, 863]]} />
      <path d="M637 602L1054 816l58-20" stroke="#000" strokeWidth="3" />
      <path d="M637 600L1054 814" stroke="#ddd" />
      <P fill={LIGHT} pts={[[634, 602], [640, 602], [640, 650], [634, 648]]} />
      {[[704, 637], [771, 671], [842, 708], [888, 731], [911, 743], [981, 779]].map(([x, y]) => (
        <path key={x} d={`M${x} ${y - 4}v49M${x + 5} ${y}v47`} stroke="#111" />
      ))}

      {/* left stacks */}
      {[310, 356, 398, 440, 481, 523].map(y => (
        <g key={y}>
          <P fill={DARK} pts={[[684, y], [706, y + 10], [706, y + 17], [684, y + 8]]} />
          <P fill={LIGHT} pts={[[684, y], [692, y - 4], [698, y], [688, y + 4]]} />
        </g>
      ))}
      <Column x={692} top={312} bottom={585} w={9} />
      <Column x={712} top={320} bottom={372} w={6} />

      {/* gable side */}
      {[...floorsY].map(y => <BackEdge key={y} y={y} />)}
      <Column x={1106} top={524} bottom={797} w={11} />
      <Column x={1188} top={510} bottom={776} w={12} />
      <P fill={LIGHT} pts={[[1114, 792], [1188, 766], [1188, 772], [1114, 798]]} />
      {floorsY.map(y => <SideBeam key={y} y={y} />)}

      {/* facade: light faces sit behind the beams, dark faces in front */}
      {frontCols.map(([x, d, w, t, b]) => (
        <P key={x} fill={LIGHT} pts={[[x + d, t + 2], [x + w, t + 6], [x + w, b - 2], [x + d, b + 2]]} />
      ))}
      {floorsY.map(y => <FrontBeam key={y} y={y} />)}
      {frontCols.map(([x, d, , t, b]) => (
        <P key={x} fill={GRIT} pts={[[x, t], [x + d, t + 2], [x + d, b + 2], [x, b]]} />
      ))}
      <P fill={LIGHT} pts={[[1055, 820], [1060, 818], [1060, 860], [1055, 863]]} />

      {/* back roof */}
      <P fill={TOP} pts={[[686, 312], [712, 300], [800, 336], [770, 348], [744, 345]]} />
      <P fill={GRIT} pts={[[684, 311], [745, 341], [740, 349], [684, 319]]} />
      <P fill={TOP} pts={[[703, 281], [789, 276], [861, 313], [800, 318]]} />
      <P fill={GRIT} pts={[[703, 281], [796, 317], [788, 324], [703, 288]]} />
      <path d="M704 280l92 38" stroke="#bbb" />
      <P fill="#9a9a9a" pts={[[789, 276], [861, 312], [854, 314], [784, 278]]} />
      <path d="M746 302l76-4" stroke="#000" strokeWidth="2" />
      <P fill={DARK} pts={[[762, 299], [798, 315], [796, 323], [762, 306]]} />
      <Column x={739} top={278} bottom={294} w={7} />
      <Column x={789} top={304} bottom={314} w={6} />
      <Column x={739} top={309} bottom={316} w={6} />

      {/* roof trusses under the openings */}
      {[[744, 390, 782, 366], [779, 408, 818, 382], [812, 426, 848, 402], [850, 440, 886, 420], [866, 452, 902, 430], [892, 468, 948, 444], [918, 476, 990, 430], [850, 400, 900, 372]].map(([x1, y1, x2, y2]) => (
        <path key={x1 + y1} d={`M${x1} ${y1}Q${(x1 + x2) / 2 + 6} ${(y1 + y2) / 2 + 5} ${x2} ${y2}l-5 -4z`} fill="#bdbdbd" stroke="#111" />
      ))}
      <P fill={LIGHT} pts={[[918, 452], [940, 442], [948, 446], [920, 460]]} />
      {[[772, 372, 410], [842, 408, 446], [888, 431, 470], [912, 444, 482], [972, 435, 458]].map(([x, t, b]) => (
        <Column key={x} x={x} top={t} bottom={b} w={7} />
      ))}

      {/* main roof */}
      <P fill="#828282" pts={[[800, 316], [774, 325], [711, 367], [744, 390], [779, 363], [752, 351]]} />
      <P fill="#8e8e8e" pts={[[800, 316], [883, 312], [1080, 414], [1002, 417]]} />
      <P fill="#7d7d7d" pts={[[800, 316], [900, 365], [850, 400], [752, 351]]} />
      <P fill={TOP} pts={[[887, 380], [965, 409], [918, 437], [846, 402]]} />
      <P fill={GRIT} pts={[[900, 367], [975, 402], [968, 410], [896, 374]]} />
      <path d="M902 366l68 34M900 374l66 33M925 386v7M947 394v8" stroke="#ccc" />
      <path d="M752 351l98 50M846 402l72 36" stroke="#000" strokeWidth="2" />
      <P fill="#7d7d7d" pts={[[974, 401], [1002, 417], [950, 451], [922, 436]]} />

      {/* right roof bays */}
      <P fill={TOP} pts={[[1054, 417], [1222, 499], [1141, 503], [1024, 446], [995, 428]]} />
      <P fill={GRIT} pts={[[1000, 418], [1043, 440], [1042, 448], [994, 424]]} />
      <path d="M991 428l40 19" stroke="#bbb" strokeWidth="2" />
      <P fill={LIGHT} pts={[[1006, 419], [1054, 418], [1060, 423], [1018, 426]]} />
      <P fill="#7d7d7d" pts={[[1024, 446], [1141, 503], [1078, 549], [950, 497]]} />
      <path d="M1062 463l-72 48M1096 481l-76 51" stroke="#ccc" strokeWidth="2" />
      <path d="M1063 464l-72 48M1097 482l-76 51" stroke="#111" />
      <path d="M1024 447l-74 50" stroke="#000" strokeWidth="2" />
      <path d="M1024 446l117 57v6" stroke="#bbb" />
      <path d="M1043 444l62-3M1063 462l72-4M1098 480l76-4M1141 503l80-4" stroke="#000" strokeWidth="2" />
      <path d="M1056 417l167 83" stroke="#111" strokeWidth="5" />
      <path d="M1056 416l166 82" stroke="#bbb" />
      <path d="M1056 419l164 81" stroke="#888" />
      <Column x={1040} top={459} bottom={474} w={6} />
      <P fill={TOP} pts={[[1078, 547], [1141, 508], [1218, 500]]} />
      <P fill={LIGHT} pts={[[1066, 554], [1219, 500], [1219, 505], [1066, 561]]} />
      <path d="M1080 546l136-46" stroke="#ccc" />

      {/* eave beam */}
      <P fill="#707070" pts={[[696, 374], [706, 371], [1064, 553], [1058, 561], [696, 380]]} />
      <path d="M696 376L1058 557v5M706 371l358 182" stroke="#000" strokeWidth="2" />
      {[[983, 508], [1053, 543]].map(([x, y]) => <Column key={x} x={x} top={y} bottom={y + 9} w={6} />)}

      {/* level lines */}
      <g stroke="#d0202a" strokeWidth="1.500" strokeDasharray="6 5 1 5">
        <path d="M936 206L707 290M936 206l236 119M936 223L707 307M936 223l236 119M936 258l-101 37M766 320l-59 22M936 258l236 119M936 300l-36 13M936 300l236 118M1082 417l90 44" />
      </g>
      {[325, 342, 377, 418, 461].map(y => <LevelMark key={y} x={1172} y={y} />)}
      {[[289], [297, true], [307], [314, true], [342], [350, true]].map(([y, wide]) => <LevelMarkLeft key={y} x={708} y={y} wide={wide} />)}

      <rect x="902" y="329" width="169" height="22" fill="#9fc6ea" opacity="0.12" />
      <text x="935" y="344" fontSize="12" fill="#999" opacity="0.4">全屏幕截图(S)</text>
    </svg>
  );
}

function ViewCube() {
  return (
    <svg width="136" height="104" viewBox="0 0 136 104" fill="none" className="absolute top-[55px] right-6">
      <defs>
        <radialGradient id="shade">
          <stop offset="0.4" stopColor="#999" />
          <stop offset="1" stopColor="#fff" stopOpacity="0" />
        </radialGradient>
      </defs>
      <ellipse cx="68" cy="66" rx="65" ry="33" fill="#f1f1f1" stroke="#b5b5b5" strokeDasharray="2 1" />
      <ellipse cx="68" cy="64" rx="50" ry="25" fill="#fff" stroke="#b5b5b5" strokeDasharray="2 1" />
      <ellipse cx="67" cy="66" rx="38" ry="17" fill="url(#shade)" />
      <path d="M34 14L71 3l32 13-37 13z" fill="#f3f3f3" stroke="#777" strokeDasharray="2 1" />
      <path d="M34 14l32 15v46L36 58z" fill="#e6e6e6" stroke="#888" />
      <path d="M66 29l37-13-1 43-36 16z" fill="#eaeaea" stroke="#888" />
      <g fill="#858585" fontFamily="'Noto Sans CJK SC', sans-serif" fontWeight="300">
        <text x="40" y="53" fontSize="20">后</text>
        <text x="73" y="53" fontSize="22">左</text>
        <text x="61" y="21" fontSize="14">上</text>
      </g>
      <path d="M25 39l8 3M27 43l7-5M101 42l14-3M103 38l8 6M10 85l14-8M12 79l14 4M8 80l10 6M100 84l20 5M104 88l12-6M108 82l8 10" stroke="#aaa" strokeWidth="2" strokeDasharray="2 1" />
    </svg>
  );
}

function NavBar() {
  return (
    <div className="absolute top-[173px] right-px flex h-[118px] w-[36px] flex-col items-center rounded-md border-2 border-[#bdbdbd] bg-[#f3f3f3] text-[#888]">
      <button aria-label="关闭导航" className="mt-px mr-px self-end">
        <Svg s={9}><circle cx="4" cy="4" r="4" fill="#b0b0b0" /><path d="M2 2l4 4M6 2L2 6" stroke="#fff" /></Svg>
      </button>
      <button aria-label="控制盘" className="mt-2">
        <Svg s={24}>
          <path d="M12 1h11v11a11 11 0 1 1-11-11z" fill="#e8ebee" stroke="#9a9a9a" />
          <circle cx="12" cy="12" r="6" fill="#f5f5f5" stroke="#9a9a9a" />
          <path d="M8 16l-4 4M16 16l4 4" stroke="#9a9a9a" />
        </Svg>
      </button>
      <Down className="mt-[7px]" />
      <span className="mt-1 h-px w-[26px] bg-[#bbb]" />
      <button aria-label="缩放" className="mt-2">
        <Svg s={17}>
          <path d="M1 1h10v10H1z" fill="#a9cf94" stroke="#8fb27b" />
          <circle cx="11" cy="11" r="3" fill="#eee" stroke="#999" />
          <path d="M13 13l3 3" stroke="#999" strokeWidth="2" />
        </Svg>
      </button>
      <Down className="mt-[9px]" />
      <Svg s={9} className="mt-auto mr-px mb-px self-end"><circle cx="4" cy="4" r="4" fill="#b0b0b0" /><path d="M2 3h4M2 5h4" stroke="#fff" /></Svg>
    </div>
  );
}

// ---------- view control bar ----------
const RedX = ({ x = 9, y = 8 }) => <path d={`M${x} ${y}l6 6M${x + 6} ${y}l-6 6`} stroke="#c8201e" strokeWidth="2" />;
const Bulb = ({ x = 12, y = 6 }) => <path d={`M${x - 1} ${y + 4}a3 3 0 1 1 3 0v4h-3z`} fill="#bfe0fb" stroke={BLUE} />;

const viewIcons = [
  <g><path d="M1 3h14v11H1z" fill="#fff" stroke={INK} /><path d="M2 4h4v3H2zM10 4h4v3h-4zM6 7h4v3H6zM2 10h4v3H2zM10 10h4v3h-4z" fill="#666" /></g>,
  <g stroke={BLUE}><path d="M1 7l4-4h10v6l-4 5H1z" fill="#a9d2f2" /><path d="M1 7h10v7M11 7l4-4" /></g>,
  <g><circle cx="7" cy="7" r="3" fill="#fff3b0" stroke="#d68a00" /><path d="M7 1v2M1 7h2M3 3l1 1M11 3l-1 1M3 11l1-1" stroke="#d68a00" /><RedX /></g>,
  <g><circle cx="7" cy="6" r="5" fill="#cfe6f9" stroke={BLUE} /><path d="M2 13h6" stroke="#777" strokeWidth="2" /><RedX /></g>,
  <g><path d="M1 4l3 2c1-2 5-2 6 0M3 6c0 5 2 7 4 7h3M7 2v2" stroke="#555" /><Bulb /></g>,
  <g><path d="M1 12h3V4h9M6 14V6h8" stroke={BLUE} strokeWidth="1.500" /><RedX x={8} y={6} /></g>,
  <g><path d="M1 12h3V4h6M6 14V6h4" stroke={BLUE} strokeWidth="1.500" /><Bulb /></g>,
  <g stroke="#444"><path d="M1 8l4-5 5-1 5 6v6H3V7M6 14V8h3" fill="#eee" /><path d="M9 10h5v4H9z" fill="#8db98a" /></g>,
  <g stroke="#345"><path d="M1 4l4 6M14 3l-3 6" /><circle cx="5" cy="10" r="2" /><circle cx="11" cy="9" r="2" /></g>,
  <Bulb x={7} />,
  <g stroke="#333"><path d="M2 3h11v3M2 3v10h5M4 1v3M8 1v3" /><path d="M8 7h6v7H8z" strokeDasharray="2 1" /></g>,
  <g><path d="M1 6h9M1 10h9M3 3v11M7 3v11" stroke="#c8403e" /><path d="M1 4h9v10" stroke={INK} /><Bulb /></g>,
  <g stroke="#555"><path d="M2 6l3-3h9v8l-3 3H2zM2 6h9v8M11 6l3-3M6 6v8" fill="#ccc" /></g>,
  <g stroke="#333"><path d="M1 3h14M3 1v13M13 1v6M1 3l2-1M3 14h4" strokeDasharray="3 1" /><path d="M9 9h6v5H9z" fill="#777" /></g>,
];

function ViewControls() {
  return (
    <div className="flex h-[18px] shrink-0 items-center border-b-2 border-white bg-[#efefef] text-[#444]">
      <button className="w-[81px] pl-[22px] text-left font-['Liberation_Sans',sans-serif] text-[12px] whitespace-pre text-black">1  :  100</button>
      <div className="flex items-center gap-[5px]">
        {viewIcons.map((ic, i) => (
          <button key={i} aria-label={`视图控制 ${i + 1}`}><Svg s={16}>{ic}</Svg></button>
        ))}
      </div>
      <Chevron dir="left" className="ml-[5px] text-[#444]" />
      <div className="flex h-full min-w-0 flex-1 items-center">
        <span className="ml-[49%] h-[15px] w-[17px] bg-[#cdcdcd]" />
        <Chevron dir="right" className="ml-auto" />
      </div>
      <Svg s={14} className="mr-px ml-1"><path d="M10 3h2M10 7h2M10 11h2M6 7h2M6 11h2M2 11h2" stroke="#aaa" strokeWidth="2" /></Svg>
    </div>
  );
}

function ViewArea() {
  return (
    <main className="flex min-w-0 flex-1 flex-col bg-white">
      <div className="flex h-5 items-center bg-[#cacaca]">
        <div className="flex h-full w-[128px] items-center bg-white pr-[3px] pl-[5px] text-[12px] text-[#222]">
          <House s={15} />
          <span className="ml-[9px]">{"{三维}"}</span>
          <button aria-label="关闭视图" className="ml-auto"><Close /></button>
        </div>
        <button aria-label="视图列表" className="mr-1 ml-auto flex flex-col items-center gap-[2px] text-[#333]">
          <span className="h-px w-2 bg-[#333]" />
          <Down />
        </button>
      </div>
      <div className="flex min-h-0 flex-1">
        <div className="relative min-w-0 flex-1 overflow-hidden">
          <div className="absolute inset-x-0 -top-[3px] bottom-0">
            <Model />
          </div>
          <ViewCube />
          <NavBar />
        </div>
        <div className="mt-[2px] flex w-4 flex-col items-center bg-[#efefef] text-[#444]">
          <Chevron dir="up" className="mt-[3px]" />
          <span className="mt-auto h-4 w-[15px] bg-[#cdcdcd]" />
          <Chevron dir="down" className="mt-auto mb-[3px]" />
        </div>
      </div>
      <ViewControls />
    </main>
  );
}

// ---------- status bar ----------
const Pointer = () => <path d="M8 6l7 8-3 .5 1 3-2 .5-1-3-2 2z" fill="#fff" stroke="#333" />;

const statusIcons = [
  <g><path d="M2 3h5v4H2zM9 3h5v4H9zM5 5h6" stroke="#c99b12" strokeWidth="1.500" /><Pointer /></g>,
  <g><path d="M1 10l7-8v5H3M1 13h8M1 10h7" stroke={BLUE} /><RedX y={1} x={10} /><Pointer /></g>,
  <g><path d="M3 1h8v3l-1 3h2v4H2V8h2L3 4zM7 11v5" fill="#f0883e" stroke="#a4501a" /><Pointer /></g>,
  <g><path d="M2 4l5-2v12l-5 1z" fill="#a9d2f2" stroke={BLUE} /><RedX y={1} x={10} /><Pointer /></g>,
  <g><path d="M5 1v9M1 5h9M4 2h2M4 9h2M2 4v2M9 4v2" stroke="#222" strokeWidth="1.500" /><Pointer /></g>,
  <circle cx="8" cy="8" r="5" stroke="#9d9d9d" strokeWidth="3" strokeDasharray="2 2" />,
];

function StatusSelect({ label, children }) {
  return (
    <div className="relative flex h-[18px] w-[204px] items-center">
      <select aria-label={label} className="h-full w-full appearance-none bg-white pl-[2px] text-[12px] text-[#777]">{children}</select>
      <Svg s={10} className="pointer-events-none absolute right-[3px]"><path d="M1 3l4 4 4-4" stroke="#aaa" /></Svg>
    </div>
  );
}

function StatusBar() {
  return (
    <footer className="flex h-8 items-start bg-[#cacaca] text-[12px] text-black">
      <p className="flex-1 pl-px leading-[25px] whitespace-nowrap">
        单击可进行选择; 按 Tab 键并单击可选择其他项目; 按 Ctrl 键并单击可将新项目添加到选择集; 按 Shift 键并单击可取消选择。
      </p>
      <div className="mr-[179px] flex h-[26px] items-center">
        <Svg s={16} className="mr-2"><path d="M1 15V9h4v6M11 15V8h4v7M5 9V5h6v10M4 7l1-4h5l2 5M8 5V1" stroke="#8c8c8c" strokeWidth="1.500" /></Svg>
        <StatusSelect label="工作集"><option /></StatusSelect>
        <Svg s={16} className="mr-[5px] ml-2"><path d="M6 1h9v5H6zM7 7l3 1-5 8H1z" fill="#bbb" stroke="#8c8c8c" /></Svg>
        <span className="w-[33px]">:0</span>
        <Svg s={16}><path d="M1 1h14v14H1z" fill="#fff" stroke={INK} strokeWidth="1.500" /><path d="M3 5h2M7 5h6M5 8h2M8 8h5M5 11h2M8 11h5M1 2h14" stroke={INK} /></Svg>
        <Svg s={16} className="mr-2 ml-[10px]"><path d="M4 1h11v14H4z" fill="#9b9b9b" /><path d="M1 7h8M6 4l4 3-4 4" stroke="#e5e5e5" strokeWidth="1.500" /></Svg>
        <StatusSelect label="设计选项"><option>主模型</option></StatusSelect>
      </div>
      <div className="flex h-[26px] items-center gap-[10px] pr-[7px]">
        {statusIcons.map((ic, i) => (
          <button key={i} aria-label={`选择选项 ${i + 1}`}><Svg s={16}>{ic}</Svg></button>
        ))}
        <button className="-ml-[2px] flex items-center text-[#444]">
          <Svg s={17}><path d="M1 1h15v3l-5 6v6l-4-2v-4L1 4z" fill="#8d949e" stroke={INK} /><path d="M2 2h13" stroke="#ddd" /></Svg>:0
        </button>
        <span className="ml-[54px] h-[22px] w-px bg-[#b8b8b8]" />
      </div>
    </footer>
  );
}

// ---------- taskbar ----------
const People = (
  <g>
    <circle cx="7" cy="9" r="4" fill="#f4c9a0" />
    <circle cx="16" cy="8" r="5" fill="#f6d3ae" />
    <path d="M1 20c0-5 3-7 6-7s4 1 5 3l-1 5H4z" fill="#f0b048" />
    <path d="M9 21c0-5 3-8 7-8s7 3 7 7c-3 3-10 4-14 1z" fill="#ee8420" />
    <path d="M14 13l2 7 2-7z" fill="#fff" />
    <path d="M11 6c1-4 9-5 10-1-3 0-6-1-10 1z" fill="#5a3a22" />
  </g>
);

const taskIcons = [
  ["开始", <path d="M4 6l7-1v6H4zM12 5l8-1v7h-8zM4 12h7v6l-7-1zM12 12h8v7l-8-1z" fill="#fff" />],
  ["搜索", <g stroke="#fff" strokeWidth="1.500"><circle cx="14" cy="9" r="6" /><path d="M10 13l-6 7" /></g>],
  ["Excel", <g><path d="M12 4h10v16H12z" fill="#fff" stroke="#1f7244" /><path d="M14 8h6M14 11h6M14 14h6M14 17h6" stroke="#1f7244" strokeWidth="2" /><path d="M1 4l13-3v21L1 19z" fill="#1f7244" /><path d="M5 8l5 8M10 8l-5 8" stroke="#fff" strokeWidth="2" /></g>],
  ["WPS", <g><path d="M0 3h16l-1 4H7l4 11-3 3z" fill="#f0442e" /><path d="M18 3h6l-7 18h-4l-2-4 5-12z" fill="#e02a22" /></g>],
  ["文件夹", <g><path d="M2 3h8l2 2h10v15H2z" fill="#e9b83c" /><path d="M2 8h20v12H2z" fill="#fbd870" /><path d="M6 20v-8h12v8h-3v-4H9v4z" fill="#3b8fd4" /></g>],
  ["Chrome", <g><circle cx="12" cy="12" r="11" fill="#35a552" /><path d="M12 12L3 5.500A11 11 0 0 1 22 7z" fill="#e33b2e" /><path d="M12 12l10-5a11 11 0 0 1-10 16z" fill="#fbc116" /><circle cx="12" cy="12" r="5.500" fill="#fff" /><circle cx="12" cy="12" r="4" fill="#2f74e0" /></g>],
  ["用户", People],
  ["AutoCAD", <g><path d="M0 0h24v23H0z" fill="#fbe9e6" /><path d="M4 20L10 3h5l5 17h-5l-1-4h-5l-1 4zM10 12h3l-1-5z" fill="#b3262b" /></g>],
  ["图片", <g><path d="M1 20L9 7l5 7 3-3 6 9h-7l-3-4-4 4z" fill="#6a5be0" /><circle cx="16" cy="4" r="3" fill="#f0b429" /></g>],
  ["用户 2", People],
  ["Revit", <g><path d="M0 0h24v23H0z" fill="#dce9f6" /><path d="M5 3h8c7 0 7 8 2 10l5 8h-5l-4-7h-1v7H5zM10 7v4h2c3 0 3-4 0-4z" fill="#2364a8" /></g>],
];

const deskIcons = [
  ["w-[56px]", <g><path d="M10 6l19 4v16l-18-4z" fill="#7cc3f3" stroke="#cfe8fa" /><path d="M4 27l20 2-2 4H2z" fill="#d8e4ee" /></g>],
  ["w-[55px]", <g><path d="M0 3h34v31H0z" fill="#5ca822" /><path d="M29 7H13q-5 0-5 5v22h5V14q0-2 2-2h12z" fill="#fff" /></g>],
  ["w-[57px]", <g><path d="M0 3h34v31H0z" fill="#eef3f8" /><path d="M6 14c3-6 7-6 11-6s8 1 11 4l-10 7-7-4M28 16v6l-11 7-11-6M6 17l11 7 11-9M8 28l9 5 10-5" stroke="#1f5f96" strokeWidth="3" /></g>],
  ["w-[56px]", <g><path d="M5 10l7-6v26l-7-6z" fill="#2a9d8f" /><path d="M14 5l9 6v16l-9 3z" fill="#1f7f78" /><path d="M1 18c5 4 9 8 12 16 3-10 9-15 19-17-6 6-10 12-12 17h-8C9 30 5 25 1 18z" fill="#e8e8b4" /></g>],
  ["w-[57px]", <g><circle cx="17" cy="19" r="17" fill="#6340f2" /><path d="M12 31V17l6-5 6 5v8l-6 3" stroke="#fff" strokeWidth="4" /></g>],
  ["w-[55px]", <g><path d="M0 3h34v31H0z" fill="#cf2030" /><circle cx="17" cy="20" r="14" stroke="#fff" strokeWidth="2" /><path d="M7 20l10-8 10 8h-3v9H10v-9z" fill="#fff" /></g>],
];

function Taskbar() {
  return (
    <div className="flex h-8 overflow-hidden">
      <div className="flex w-[783px] shrink-0 bg-[#22363f]">
        {taskIcons.map(([name, ic], i) => (
          <button
            key={name}
            aria-label={name}
            className={`flex h-8 w-[49px] justify-center ${i > 3 ? "border-b-2 border-[#76b3e4]" : ""} ${i === 10 ? "bg-[#4e6069]" : ""}`}
          >
            <Svg s={24}>{ic}</Svg>
          </button>
        ))}
      </div>
      <div className="relative flex flex-1 bg-gradient-to-r from-[#00a0f5] via-[#0085e6] to-[#0549bd] pl-px">
        {deskIcons.map(([w, ic], i) => (
          <div key={i} className={`flex shrink-0 justify-center ${w}`}>
            <Svg s={34}>{ic}</Svg>
          </div>
        ))}
        <div className="ml-[239px]">
          <Svg s={32}>
            <path d="M2 7h26l2 3v5H2z" fill="#8e3d91" />
            <path d="M4 15h26v7H4z" fill="#2848b8" />
            <path d="M4 22h26v7H6z" fill="#2f8f3a" />
            <path d="M2 7l5 3v19l-5-3z" fill="#ddd" stroke="#555" />
            <path d="M7 15h23M7 22h23" stroke="#ddd" />
            <path d="M16 7h4v22h-4z" fill="#8a6a3a" />
            <path d="M15 15h6v5h-6z" stroke="#ddd" />
          </Svg>
        </div>
        <div className="absolute top-0 left-[40%] h-[3px] w-[45%] bg-[#0a5ea5]" />
      </div>
    </div>
  );
}

export default function App() {
  return (
    <div className="flex h-screen flex-col overflow-hidden bg-[#eee] font-['Open_Sans','Noto_Sans_CJK_SC',sans-serif]">
      <TitleBar />
      <Tabs />
      <Ribbon />
      <div className="h-[26px] shrink-0 bg-[#eee]" />
      <div className="flex min-h-0 flex-1 border-y-2 border-[#cacaca]">
        <aside className="flex w-[221px] shrink-0 flex-col border-r-[3px] border-[#cacaca]">
          <Properties />
          <Browser />
        </aside>
        <ViewArea />
      </div>
      <StatusBar />
      <Taskbar />
    </div>
  );
}
